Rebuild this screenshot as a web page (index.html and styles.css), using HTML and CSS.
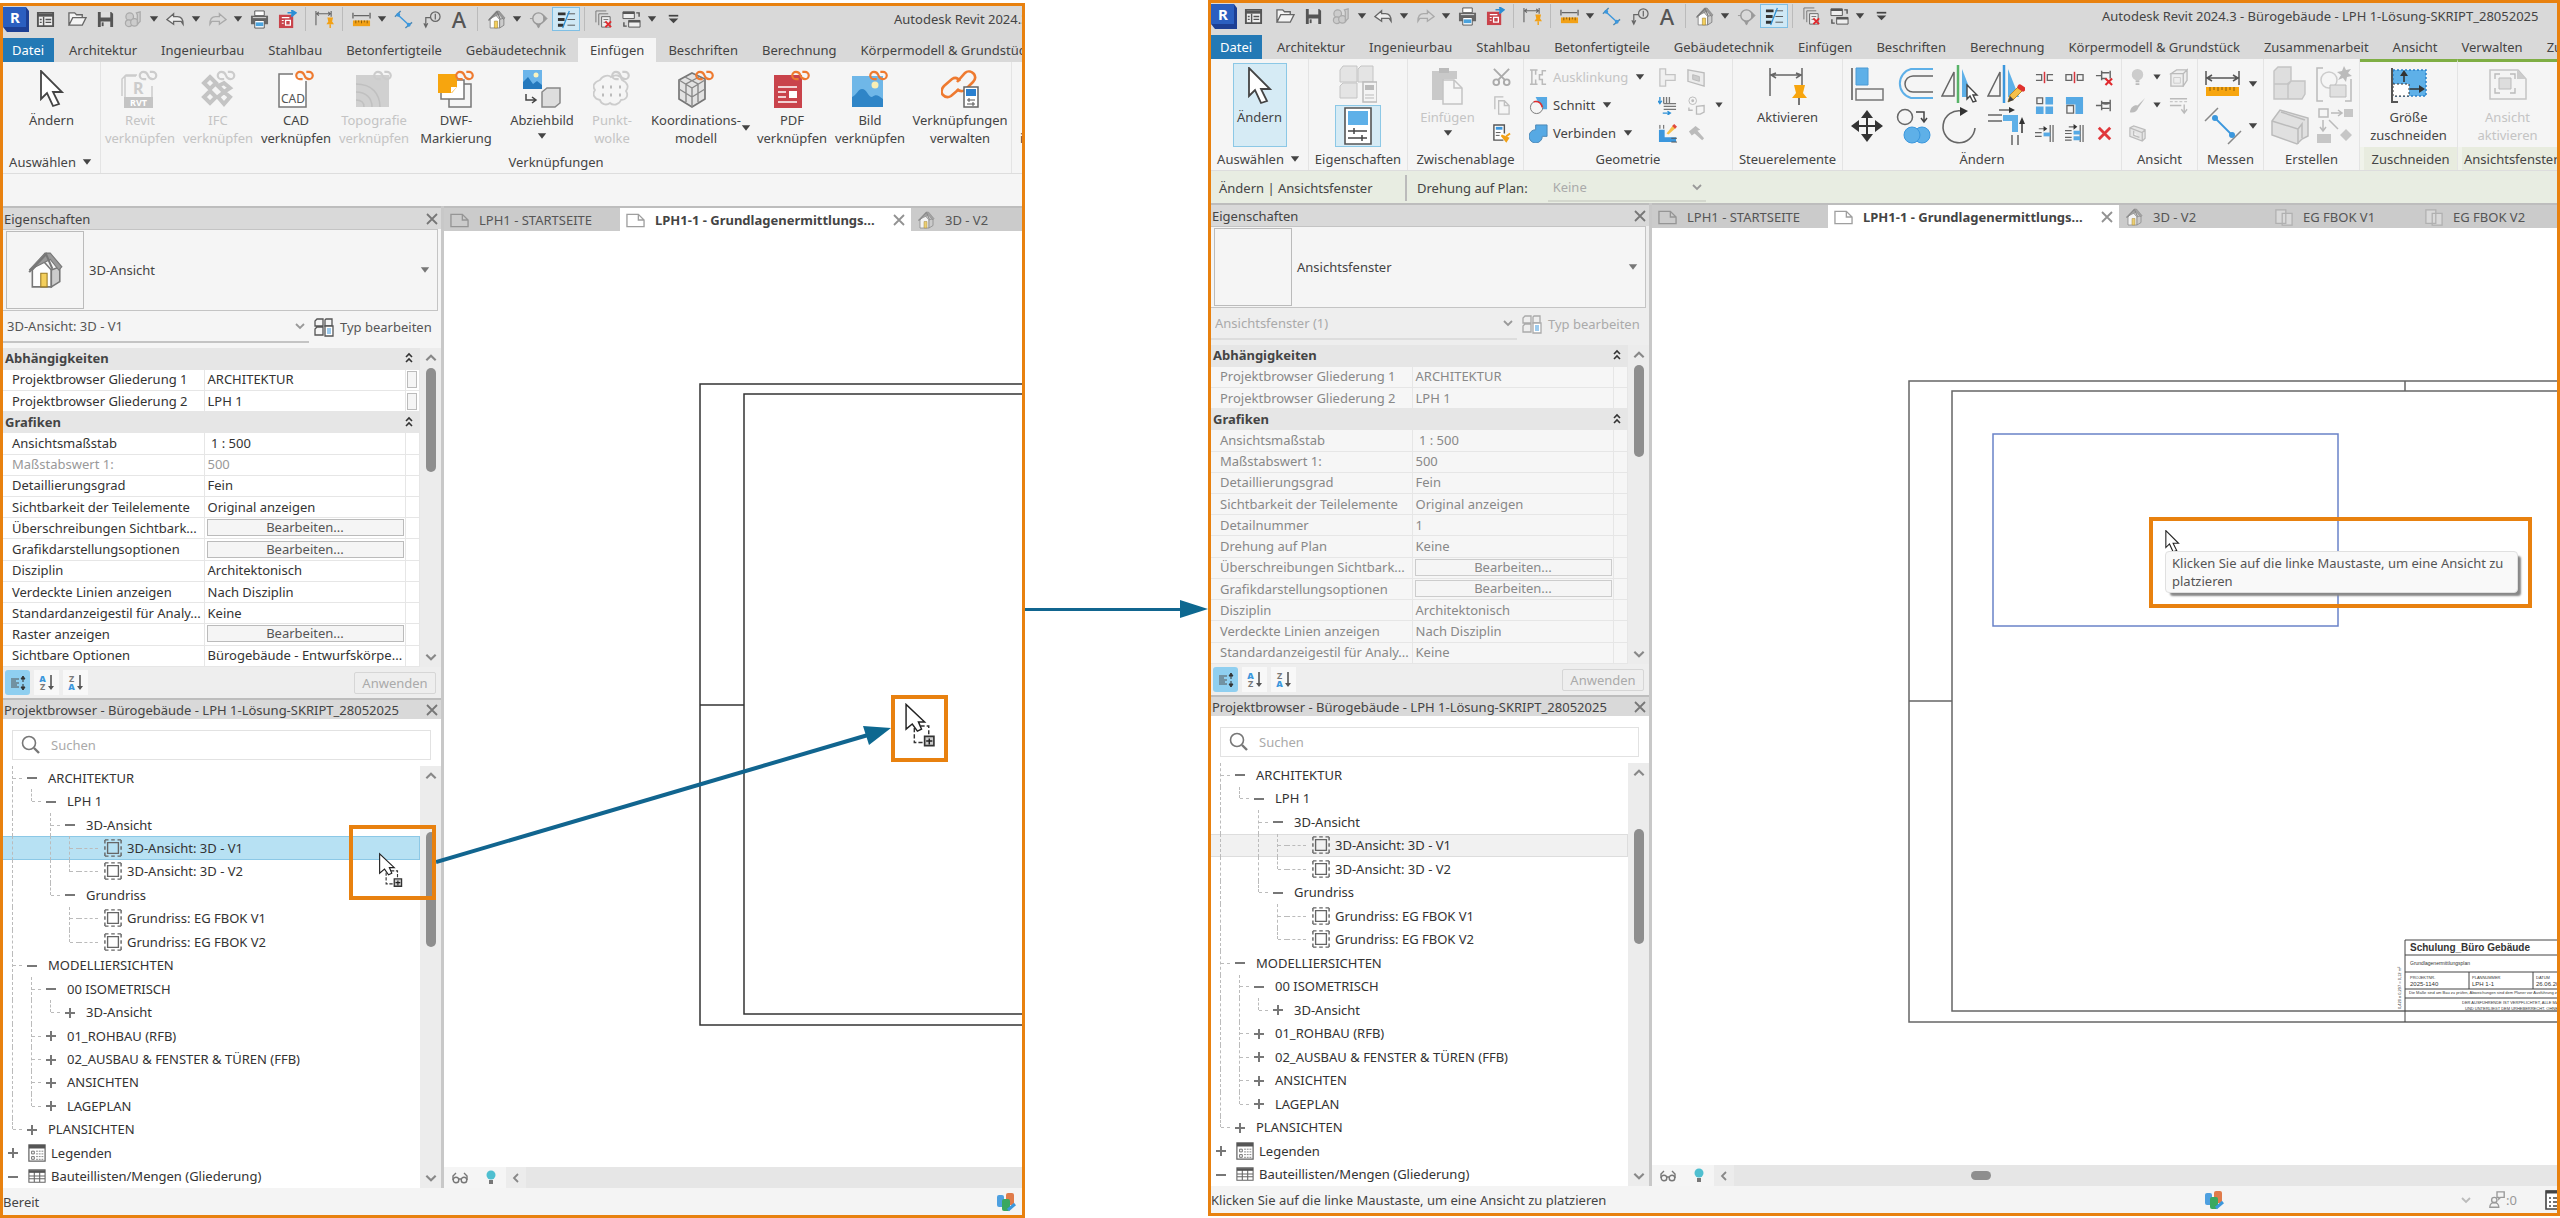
FILE: index.html
```html
<!DOCTYPE html>
<html lang="de">
<head>
    <meta charset="UTF-8">
    <meta name="viewport" content="width=device-width, initial-scale=1.0">
    <title>Ansicht auf Plan platzieren</title>
    <link rel="stylesheet" href="styles.css">
</head>
<body>
    <!-- Icons -->
    <svg class="sprite" aria-hidden="true">
        <defs>
            <symbol id="logo" viewBox="0 0 26 26"><path d="M0 1h23l3 4v21H4l-4-5z" fill="#1d3f94"/><path d="M0 1h23v20H0z" fill="#2b5fc0"/><text x="7" y="17" font-size="15" font-weight="700" fill="#fff" font-family="Noto Sans, sans-serif">R</text></symbol>
            <symbol id="win" viewBox="0 0 20 20"><path d="M2 3h16v14H2z" fill="#eee" stroke="#555" stroke-width="2"/><path d="M2 4h16v3H2z" fill="#555"/><path d="M8 7v10M10 10h6M10 13h6M4 10h2M4 13h2" stroke="#555" stroke-width="1.5"/></symbol>
            <symbol id="open" viewBox="0 0 20 20"><path d="M1 16V3h6l2 2h6v3M1 16l4-8h14l-4 8z" fill="#f4f4f4" stroke="#666" stroke-width="1.4"/></symbol>
            <symbol id="save" viewBox="0 0 20 20"><path d="M2 2h14l2 2v14H2z" fill="#555"/><path d="M5 2h10v6H5zM5 12h10v6H5z" fill="#ddd"/><path d="M7 13v4" stroke="#555" stroke-width="2"/></symbol>
            <symbol id="sync" viewBox="0 0 20 20"><g fill="#ccc" stroke="#aaa" stroke-width="1.3"><circle cx="6" cy="7" r="4"/><circle cx="5" cy="14" r="3.5"/><circle cx="11" cy="13" r="4"/><path d="M13 3l4-1v10l-3 3V5z"/></g></symbol>
            <symbol id="undo" viewBox="0 0 20 20"><path d="M8 4L1 10l7 5v-3h8l2 3q0-8-6-8H8z" fill="#eee" stroke="currentColor" stroke-width="1.4"/></symbol>
            <symbol id="redo" viewBox="0 0 20 20"><path d="M12 4l7 6-7 5v-3H4l-2 3q0-8 6-8h4z" fill="none" stroke="currentColor" stroke-width="1.4"/></symbol>
            <symbol id="print" viewBox="0 0 20 20"><path d="M5 1h10v5H5z" fill="#fff" stroke="#555"/><path d="M1 6h18v9H1z" fill="#666"/><path d="M3 8h14" stroke="#ddd"/><path d="M5 11h10v8H5z" fill="#fff" stroke="#555"/><path d="M6 13h8v4H6z" fill="#4ba3dd"/></symbol>
            <symbol id="pdfexp" viewBox="0 0 20 20"><path d="M1 5h15v14H1z" fill="#c9434b"/><path d="M4 8h8M4 11h2M4 14h2" stroke="#fff" stroke-width="1.2"/><path d="M8 11h5v5H8z" fill="none" stroke="#fff" stroke-width="1.4"/><path d="M10 3h6M14 0l5 3-5 4" fill="#2b8fd6" stroke="#2b8fd6" stroke-width="1.6"/></symbol>
            <symbol id="pindim" viewBox="0 0 20 20"><path d="M1 1v15M17 1v6M2 4h14M4 2L2 4l2 2M14 2l2 2-2 2" fill="none" stroke="#666" stroke-width="1.2"/><path d="M13 8h6l-1 4 2 3h-8l2-3z" fill="#f2a116"/><path d="M16 15v4" stroke="#f2a116" stroke-width="1.5"/></symbol>
            <symbol id="measure" viewBox="0 0 20 20"><path d="M1 3v6M19 3v6M2 6h16" stroke="#666" stroke-width="1.4"/><path d="M1 11h18v6H1z" fill="#f2a116"/><path d="M4 11v3M7 11v2M10 11v3M13 11v2M16 11v3" stroke="#8b5c08"/></symbol>
            <symbol id="dim" viewBox="0 0 20 20"><path d="M4 5l12 11" stroke="#3b97dd" stroke-width="1.5"/><path d="M1 7l6-6M12 19l7-6" stroke="#4e8ab5" stroke-width="1.5"/><circle cx="4.500" cy="5" r="2" fill="#3b97dd"/><circle cx="15.500" cy="15.500" r="2" fill="#3b97dd"/></symbol>
            <symbol id="tag" viewBox="0 0 20 20"><circle cx="14" cy="7" r="5" fill="none" stroke="#666" stroke-width="1.3"/><path d="M14 4v6M9 8H4v10M2 14l2 4 2-4" fill="none" stroke="#666" stroke-width="1.3"/></symbol>
            <symbol id="house" viewBox="0 0 36 36"><path d="M6 18v16h18V18L15 8z" fill="#fdfdfd" stroke="#777" stroke-width="1.500"/><path d="M24 18v16l8-5V15z" fill="#ccc" stroke="#777" stroke-width="1.500"/><path d="M3 18L18 2h5l11 13-3 3-8-10z" fill="#999" stroke="#777"/><path d="M3 20L19 3l6 14" fill="none" stroke="#777" stroke-width="2"/><path d="M14 34V21h6v13z" fill="#f4cf5c" stroke="#9a7b25"/></symbol>
            <symbol id="section" viewBox="0 0 20 20"><circle cx="10" cy="9" r="6" fill="none" stroke="#999" stroke-width="1.5"/><path d="M15 5l4 4-4 4M8 15h4l-2 4zM1 9h3" fill="#999" stroke="#999"/></symbol>
            <symbol id="thin" viewBox="0 0 20 20"><path d="M1 4h8M1 10h7M1 16h6" stroke="#333" stroke-width="3"/><path d="M11 4h8M11 10h8M11 16h8" stroke="#555"/><path d="M13 1L6 19" stroke="#2b8fd6" stroke-width="1.3"/></symbol>
            <symbol id="closehid" viewBox="0 0 20 20"><path d="M2 13V1h11M5 16V4h10" fill="none" stroke="#777"/><path d="M8 7h9v11H8z" fill="#eee" stroke="#666"/><path d="M10 10h5M10 13h3" stroke="#777"/><path d="M12 12l6 6M18 12l-6 6" stroke="#e02a2e" stroke-width="2"/></symbol>
            <symbol id="switch" viewBox="0 0 20 20"><path d="M1 2h12v7H1zM7 11h12v7H7z" fill="#eee" stroke="#555"/><path d="M1 3h12M7 12h12" stroke="#555" stroke-width="2.500"/><path d="M15 3h3v4M5 17H2v-4" fill="none" stroke="#555" stroke-width="1.5"/></symbol>
            <symbol id="custom" viewBox="0 0 20 20"><path d="M5 6h10" stroke="#444" stroke-width="1.8"/><path d="M5 9h10l-5 5z" fill="#444"/></symbol>
            <symbol id="down" viewBox="0 0 10 10"><path d="M2 3h6L5 7z" fill="currentColor"/></symbol>
            <symbol id="chev" viewBox="0 0 12 12"><path d="M2 4l4 4 4-4" fill="none" stroke="currentColor" stroke-width="1.8"/></symbol>
            <symbol id="x" viewBox="0 0 12 12"><path d="M1 1l10 10M11 1L1 11" stroke="currentColor" stroke-width="1.8"/></symbol>
            <symbol id="dblup" viewBox="0 0 10 12"><path d="M2 5l3-3 3 3M2 10l3-3 3 3" fill="none" stroke="#333" stroke-width="1.6"/></symbol>
            <symbol id="arrow" viewBox="0 0 24 38"><path d="M1 1v28l6-6 6 13 6-2-6-12h9z" fill="#fff" stroke="currentColor" stroke-width="1.8"/></symbol>
            <symbol id="chain" viewBox="0 0 22 12"><path d="M11 6c-1-3-3-4-5-4a4 4 0 0 0 0 8h3M11 6c1 3 3 4 5 4a4 4 0 0 0 0-8h-3" fill="none" stroke="currentColor" stroke-width="2.400"/></symbol>
            <symbol id="rvt" viewBox="0 0 38 38"><path d="M16 5H5L1 9v17M31 16v20H4V6h11" fill="none" stroke="#ccc" stroke-width="1.500"/><text x="12" y="24" font-size="16" font-weight="700" fill="#ccc" font-family="Noto Sans, sans-serif">R</text><path d="M3 27h29v11H3z" fill="#c4c4c4"/><text x="9" y="36" font-size="9" font-weight="700" fill="#fff" font-family="Noto Sans, sans-serif">RVT</text><use href="#chain" x="16" y="0" width="22" height="11" color="#ccc"/></symbol>
            <symbol id="ifc" viewBox="0 0 38 38"><g fill="none" stroke="#c4c4c4" stroke-width="4"><path d="M11 7l6 6-6 6-6-6zM25 13l6 5-6 4-6-6zM11 21l6 6-6 6-6-6zM25 22l6 5-6 7-6-7z"/></g><use href="#chain" x="16" y="0" width="22" height="11" color="#ccc"/></symbol>
            <symbol id="cad" viewBox="0 0 38 38"><path d="M16 4H2v33h27V11" fill="#fff" stroke="#777" stroke-width="1.500"/><text x="4" y="33" font-size="12" fill="#555" font-family="Noto Sans, sans-serif">CAD</text><use href="#chain" x="17" y="0" width="21" height="11" color="#ee7a30"/></symbol>
            <symbol id="topo" viewBox="0 0 38 38"><path d="M1 5h33v32H1z" fill="#d0d0d0"/><path d="M1 14c16 0 24 10 24 23M1 22c10 0 16 6 16 15M1 30c5 0 8 2 8 7" fill="none" stroke="#c0c0c0" stroke-width="1.500"/><use href="#chain" x="17" y="0" width="21" height="11" color="#ccc"/></symbol>
            <symbol id="dwf" viewBox="0 0 38 38"><path d="M20 14h14v23H12V27" fill="none" stroke="#777" stroke-width="1.500"/><path d="M4 10h23v19H4z" fill="#fff" stroke="#777" stroke-width="1.500"/><path d="M1 4h19v13l-5 6H1z" fill="#f7a50e"/><path d="M20 17h-6v6" fill="#fff"/><use href="#chain" x="17" y="0" width="21" height="11" color="#ee7a30"/></symbol>
            <symbol id="decal" viewBox="0 0 38 38"><path d="M0 0h19v19H0z" fill="#6cb5ea"/><path d="M0 12l5-5 5 7 4-3 5 4v4H0z" fill="#2579bd"/><circle cx="13" cy="5" r="2.500" fill="#fbf3c0"/><path d="M3 24v6h9M9 27l4 3-4 3" fill="none" stroke="#444" stroke-width="1.500"/><path d="M19 22l5-4h13v15l-5 4H19z" fill="#ddd" stroke="#888" stroke-width="1.500"/></symbol>
            <symbol id="cloud" viewBox="0 0 38 38"><path d="M7 10c3-5 9-5 11-3 4-3 10-2 11 3 6 3 7 7 4 11 3 5 0 9-5 9-2 5-8 6-11 3-4 3-9 1-10-3-6-1-8-6-5-10-3-4-1-8 5-10z" fill="none" stroke="#ccc" stroke-width="1.800"/><path d="M9 17h2M17 17h2M26 17h2M9 25h2M17 25h2M26 25h2" stroke="#bbb" stroke-width="3"/><use href="#chain" x="17" y="0" width="21" height="11" color="#ccc"/></symbol>
            <symbol id="coord" viewBox="0 0 38 38"><path d="M15 3l13 6v20l-13 8-13-8V10z" fill="#e2e2e2" stroke="#777" stroke-width="1.700"/><path d="M2 10l13 8 13-8M15 18v19M2 19l13 8 13-8M8 7l13 7v18M22 7L9 14v18" fill="none" stroke="#888" stroke-width="1.400"/><use href="#chain" x="17" y="0" width="21" height="11" color="#ee7a30"/></symbol>
            <symbol id="pdf" viewBox="0 0 38 38"><path d="M1 5h28v33H1z" fill="#c9434b"/><path d="M5 17h19M5 22h8M5 27h8M5 32h19" stroke="#fff" stroke-width="1.600"/><path d="M16 21h8v7h-8z" fill="#fff"/><use href="#chain" x="17" y="0" width="21" height="11" color="#ee7a30"/></symbol>
            <symbol id="pic" viewBox="0 0 38 38"><path d="M1 6h31v31H1z" fill="#6fb7e8"/><path d="M1 27c4-1 6-8 10-8 5 0 6 8 10 8 4-3 6-2 11 2v8H1z" fill="#2f85c7"/><circle cx="24" cy="15" r="3.500" fill="#f8efb5"/><use href="#chain" x="17" y="0" width="21" height="11" color="#ee7a30"/></symbol>
            <symbol id="links" viewBox="0 0 38 38"><g fill="none" stroke="#ee7a30" stroke-width="2.600"><path d="M16 12l8-9c3-3 7-1 9 1 2 3 1 6-1 8l-8 8c-3 2-6 1-8-1"/><path d="M17 20l-7 6c-3 2-6 1-8-1s-2-6 1-9l8-7c3-2 6-1 8 2"/></g><path d="M23 17h14v20H23z" fill="#fff" stroke="#666" stroke-width="1.500"/><path d="M25 19h10v7H25z" fill="#2980d0"/><path d="M26 30h8M26 34h8M28 28v4M32 32v4" stroke="#555"/></symbol>
            <symbol id="typ" viewBox="0 0 20 20"><path d="M3 2h6v7H1V4zM12 2h6v7h-7V3zM3 10h6v8H1v-6z" fill="none" stroke="currentColor" stroke-width="1.300"/><path d="M11 9h8v10h-8z" fill="#fff" stroke="currentColor" stroke-width="1.300"/><path d="M13 12h4M13 14h4M13 16h4" stroke="#3b97dd"/></symbol>
            <symbol id="sheet" viewBox="0 0 20 16"><path d="M1 2h12l6 6v7H1zM13 2v6h6" fill="none" stroke="#888" stroke-width="1.400"/></symbol>
            <symbol id="plan" viewBox="0 0 20 20"><path d="M1 2h11v15H1zM8 6h11v13H8z" fill="#ddd" stroke="#aaa" stroke-width="1.400"/></symbol>
            <symbol id="view" viewBox="0 0 20 20"><path d="M4 4h12v12H4z" fill="none" stroke="#666" stroke-width="1.500"/><path d="M1 1h18v18H1z" fill="none" stroke="#666" stroke-width="1.600" stroke-dasharray="4 3 4 3 4 0"/></symbol>
            <symbol id="legend" viewBox="0 0 20 20"><path d="M1 1h18v18H1z" fill="#fff" stroke="#666" stroke-width="1.400"/><path d="M1 3h18" stroke="#555" stroke-width="4"/><path d="M4 8h3v3H4zM4 14h3v3H4z" fill="none" stroke="#666"/><path d="M9 8h8M9 11h8M9 14h8M9 17h8" stroke="#777" stroke-dasharray="2 1"/></symbol>
            <symbol id="tbl" viewBox="0 0 20 16"><path d="M1 1h18v14H1zM1 8h18M1 11h18M7 3v12M13 3v12" fill="none" stroke="#666" stroke-width="1.200"/><path d="M1 3h18" stroke="#555" stroke-width="3"/></symbol>
            <symbol id="search" viewBox="0 0 20 20"><circle cx="8" cy="8" r="6.500" fill="none" stroke="#777" stroke-width="1.600"/><path d="M13 13l5 5" stroke="#777" stroke-width="2.400"/></symbol>
            <symbol id="sortcat" viewBox="0 0 16 16"><path d="M1 4h8M1 8h8M1 12h8M1 6h5M1 10h6" stroke="#555"/><path d="M13 4v3M13 9v4M11 4l2-3 2 3zM11 12l2 3 2-3z" fill="#333" stroke="#333"/></symbol>
            <symbol id="down2" viewBox="0 0 6 16"><path d="M3 0v11" stroke="#555" stroke-width="1.600"/><path d="M0 11h6l-3 4z" fill="#555"/></symbol>
            <symbol id="glasses" viewBox="0 0 16 12"><g fill="none" stroke="#777" stroke-width="1.400"><circle cx="4" cy="8" r="2.800"/><circle cx="12" cy="8" r="2.800"/><path d="M1 8V4l3-3M15 8V4l-3-3M7 7h2"/></g></symbol>
            <symbol id="bulb" viewBox="0 0 10 16"><circle cx="5" cy="5" r="4.500" fill="currentColor"/><path d="M3 11h4M3 13h4" stroke="#777" stroke-width="2"/></symbol>
            <symbol id="lamp" viewBox="0 0 20 20"><circle cx="10" cy="7" r="6" fill="#ccc"/><path d="M8 14h4M8 17h4" stroke="#bbb" stroke-width="2"/></symbol>
            <symbol id="wset" viewBox="0 0 20 20"><rect x="1" y="3" width="7" height="12" rx="2" fill="#4ea0e0"/><rect x="10" y="1" width="8" height="12" rx="2" fill="#e07b4a"/><rect x="6" y="7" width="8" height="12" rx="2" fill="#3aa860"/><path d="M12 18l7-6" stroke="#3b97dd" stroke-width="3"/></symbol>
            <symbol id="people" viewBox="0 0 20 20"><circle cx="7" cy="10" r="3" fill="none" stroke="#999" stroke-width="1.500"/><path d="M2 18c0-7 10-7 10 0zM10 1h8v6h-4l-2 2V7h-2z" fill="none" stroke="#999" stroke-width="1.500"/></symbol>
            <symbol id="list" viewBox="0 0 20 20"><path d="M1 1h18v18H1z" fill="#fff" stroke="#444" stroke-width="1.600"/><path d="M1 2h18" stroke="#444" stroke-width="3"/><path d="M4 8h2M8 8h9M4 12h2M8 12h9M4 16h2M8 16h9" stroke="#444" stroke-width="1.400"/></symbol>
            <symbol id="props4" viewBox="0 0 38 38"><g fill="#e4e4e4" stroke="#c4c4c4"><path d="M4 1h14v16H1V5zM22 1h12v16H19V4zM4 18h14v15H1V21z"/></g><path d="M24 17h14v20H24z" fill="#f4f4f4" stroke="#bbb" stroke-width="1.500"/><path d="M26 20h9v5h-9z" fill="#bbb"/><path d="M26 30h9M26 33h9" stroke="#bbb"/></symbol>
            <symbol id="props" viewBox="0 0 28 38"><path d="M1 1h26v36H1z" fill="#fff" stroke="#555" stroke-width="1.600"/><path d="M4 4h20v14H4z" fill="#5eb0e8"/><path d="M4 24h19M4 31h19M10 21v6M18 28v6" stroke="#444" stroke-width="1.500"/></symbol>
            <symbol id="paste" viewBox="0 0 34 38"><path d="M1 4h25v8H13v21H1z" fill="#c9c9c9"/><path d="M8 1h10v5H8z" fill="#bbb"/><path d="M12 13h11l8 8v16H12z" fill="#f6f6f6" stroke="#c4c4c4" stroke-width="1.500"/><path d="M23 13v8h8" fill="none" stroke="#c4c4c4" stroke-width="1.500"/></symbol>
            <symbol id="cut" viewBox="0 0 20 20"><g fill="none" stroke="#aaa" stroke-width="2"><path d="M2 1l12 12M18 1L6 13"/><circle cx="4.500" cy="15" r="3"/><circle cx="15.500" cy="15" r="3"/></g></symbol>
            <symbol id="copy" viewBox="0 0 20 20"><path d="M3 14V1h9M7 5h6l5 5v9H7zM13 5v5h5" fill="none" stroke="#c0c0c0" stroke-width="1.400"/></symbol>
            <symbol id="match" viewBox="0 0 20 20"><path d="M12 17H2V1h11v9" fill="#fff" stroke="#555" stroke-width="1.500"/><path d="M4 3h7v3H4z" fill="#3b97dd"/><path d="M4 9h5M4 12h4" stroke="#555"/><path d="M10 12l5 6 2-3zM15 13l4-3" fill="#f2a116" stroke="#f2a116" stroke-width="2"/></symbol>
            <symbol id="cope" viewBox="0 0 20 20"><path d="M1 2h8M1 17h8M3 2v15M7 2v5M7 12v5M18 3h-4v4h-3v5h3v5h4" fill="none" stroke="#bbb" stroke-width="1.600"/></symbol>
            <symbol id="cutg" viewBox="0 0 20 20"><path d="M7 1h12v13h-6z" fill="#56a9e4"/><circle cx="8" cy="12" r="6.500" fill="#f5f5f5" stroke="#777"/><path d="M5 6c5-1 8 2 9 6" fill="none" stroke="#e02a2e" stroke-width="1.600"/></symbol>
            <symbol id="joing" viewBox="0 0 20 20"><path d="M7 1h12v12h-5a7 7 0 1 1-7-7z" fill="#56a9e4" stroke="#4a86b5"/></symbol>
            <symbol id="joint" viewBox="0 0 20 20"><path d="M2 1h6v6h10v6H8v6H2z" fill="#f0f0f0" stroke="#c4c4c4" stroke-width="1.400"/></symbol>
            <symbol id="box" viewBox="0 0 20 20"><path d="M1 2l17 3v14L1 14z" fill="#ececec" stroke="#bbb" stroke-width="1.400"/><path d="M6 7l7 2v5l-7-2z" fill="#ccc" stroke="#bbb"/></symbol>
            <symbol id="wallj" viewBox="0 0 20 20"><path d="M6 1v7M9 1v7M12 1v7M6 8h13M6 11h13M6 14h13" stroke="#777" stroke-width="1.400"/><path d="M2 1v7M0 5l2 3 2-3M5 18h7M10 16l3 2-3 2" fill="none" stroke="#2b8fd6" stroke-width="1.400"/></symbol>
            <symbol id="split2" viewBox="0 0 20 20"><circle cx="6" cy="5" r="4" fill="none" stroke="#bbb"/><circle cx="6" cy="5" r="1.500" fill="#bbb"/><path d="M10 11l8-1v7l-4 2h-4zM2 12v3h4" fill="none" stroke="#bbb" stroke-width="1.400"/></symbol>
            <symbol id="paint" viewBox="0 0 20 20"><path d="M1 6h6v8h12v5H1z" fill="#3b97dd"/><path d="M2 1v4M6 1v4M14 19h6M14 15h6" stroke="#555"/><path d="M9 10l7-9 3 3-8 7z" fill="#f6c04a"/><path d="M16 1l3 3" stroke="#e0483e" stroke-width="3"/></symbol>
            <symbol id="hammer" viewBox="0 0 20 20"><path d="M2 8l7-6 5 4-3 1 7 8-2 2-8-7-3 2z" fill="#bbb"/></symbol>
            <symbol id="actpin" viewBox="0 0 38 38"><path d="M1 1v28M33 1v18M2 8h30M7 6L2 8l5 3M27 6l5 2-5 3" fill="none" stroke="#666" stroke-width="1.500"/><path d="M25 18h11l-2 8 4 5H23l4-5z" fill="#f7a50e"/><path d="M30 31v7" stroke="#555" stroke-width="1.600"/></symbol>
            <symbol id="align" viewBox="0 0 38 38"><path d="M3 3v32" stroke="#555" stroke-width="1.500"/><path d="M7 3h12v17H7z" fill="#5eb0e8" stroke="#4a9ad4"/><path d="M7 24h27v11H7z" fill="#f5f5f5" stroke="#777" stroke-width="1.500"/></symbol>
            <symbol id="offset" viewBox="0 0 38 38"><path d="M38 4H16a15 15 0 0 0 0 29h22" fill="none" stroke="#5eb0e8" stroke-width="2"/><path d="M38 11H18a8 8 0 0 0 0 16h20" fill="none" stroke="#666" stroke-width="1.500"/></symbol>
            <symbol id="mirror1" viewBox="0 0 38 38"><path d="M13 7v24H1z" fill="none" stroke="#666" stroke-width="1.500"/><path d="M17 0v38" stroke="#58b368" stroke-width="2.500"/><path d="M21 4v28h11z" fill="#5eb0e8"/><path d="M26 20v14l3-3 3 6 3-1-3-6h4z" fill="#fff" stroke="#444" stroke-width="1.400"/></symbol>
            <symbol id="mirror2" viewBox="0 0 38 38"><path d="M13 7v24H1z" fill="none" stroke="#666" stroke-width="1.500"/><path d="M17 0v38" stroke="#3b97dd" stroke-width="2.500"/><path d="M21 4v28h11z" fill="#5eb0e8"/><path d="M21 37l2-7L33 20l4 4-10 10z" fill="#f6c04a" stroke="#b88a2c"/><path d="M33 22l3 2" stroke="#e0322e" stroke-width="5" stroke-linecap="round"/><path d="M21 37l2-6 4 4z" fill="#444"/></symbol>
            <symbol id="move" viewBox="0 0 38 38"><path d="M18 6v26M5 19h26" stroke="#333" stroke-width="2"/><path d="M18 3l6 8H12zM18 35l6-8H12zM2 19l8-6v12zM34 19l-8-6v12z" fill="#333"/></symbol>
            <symbol id="cpy" viewBox="0 0 38 38"><circle cx="10" cy="10" r="7.500" fill="none" stroke="#666" stroke-width="1.500"/><path d="M21 5h8v9M26 11l3 4 3-4" fill="none" stroke="#444" stroke-width="1.500"/><circle cx="27" cy="28" r="8" fill="#5eb0e8" stroke="#3b97dd"/><circle cx="17" cy="28" r="8" fill="#5eb0e8" stroke="#3b97dd"/></symbol>
            <symbol id="rot" viewBox="0 0 38 38"><path d="M21 4A16 16 0 1 0 34 21" fill="none" stroke="#666" stroke-width="1.600"/><path d="M19 0l8 4-8 5z" fill="#333"/></symbol>
            <symbol id="trim" viewBox="0 0 38 38"><path d="M1 8h14M1 14h14M25 28v10M31 28v10M12 3h12" stroke="#666" stroke-width="1.500"/><path d="M16 8h15v17h-6V14h-9z" fill="#5eb0e8"/><path d="M22 0l6 3-6 3zM35 10l3 7h-6z" fill="#333"/><path d="M35 14v12" stroke="#333" stroke-width="1.500"/></symbol>
            <symbol id="split" viewBox="0 0 20 20"><path d="M1 7h6v6H1M19 7h-6v6h6" fill="none" stroke="#666" stroke-width="1.400"/><path d="M10 4v12" stroke="#d8333a" stroke-width="1.600"/></symbol>
            <symbol id="gap" viewBox="0 0 20 20"><path d="M1 7h6v6H1zM19 7h-6v6h6z" fill="none" stroke="#666" stroke-width="1.400"/><path d="M10 4v12" stroke="#d8333a" stroke-width="1.600"/></symbol>
            <symbol id="pin" viewBox="0 0 20 20"><path d="M1 10h6M7 5v10M7 7h8M7 13h8M16 4v12M7 7c3 2 6 2 9 0" fill="none" stroke="#666" stroke-width="1.500"/></symbol>
            <symbol id="unpin" viewBox="0 0 20 20"><path d="M1 8h6M7 3v10M7 5h8M7 11h5M16 3v8" fill="none" stroke="#666" stroke-width="1.500"/><path d="M11 11l7 7M18 11l-7 7" stroke="#e02a2e" stroke-width="2.200"/></symbol>
            <symbol id="array" viewBox="0 0 20 20"><path d="M2 2h6v6H2z" fill="none" stroke="#666" stroke-width="1.400"/><path d="M11 1h8v8h-8zM1 11h8v8H1zM11 11h8v8h-8z" fill="#56a9e4"/></symbol>
            <symbol id="scale" viewBox="0 0 20 20"><path d="M1 1h18v18h-8V9H1z" fill="#56a9e4"/><path d="M2 10h7v8H2z" fill="none" stroke="#666" stroke-width="1.400"/></symbol>
            <symbol id="ext" viewBox="0 0 20 20"><path d="M0 9h7M0 13h7M16 1v18M19 1v18M4 5h7" stroke="#666" stroke-width="1.300"/><path d="M9 9h7v4H9z" fill="#56a9e4"/><path d="M9 2l4 3-4 3z" fill="#333"/></symbol>
            <symbol id="ext2" viewBox="0 0 20 20"><path d="M0 7h7M0 10h7M0 14h7M0 17h7M16 1v18M19 1v18M4 3h7" stroke="#666" stroke-width="1.300"/><path d="M9 7h7v4H9zM9 13h7v4H9z" fill="#56a9e4"/><path d="M9 0l4 3-4 3z" fill="#333"/></symbol>
            <symbol id="del" viewBox="0 0 20 20"><path d="M4 4l12 12M16 4L4 16" stroke="#e0383c" stroke-width="3"/></symbol>
            <symbol id="brush" viewBox="0 0 20 20"><path d="M2 17c1-6 5-8 8-7L18 2l-7 10c-1 4-5 6-9 5z" fill="#bbb"/></symbol>
            <symbol id="cube" viewBox="0 0 20 20"><path d="M2 6l6-4h11l-4 4zM2 6h13v13H2zM15 6l4-4v11l-4 6z" fill="#eee" stroke="#bbb" stroke-width="1.400"/><path d="M5 10h7v6H5z" fill="none" stroke="#ccc"/></symbol>
            <symbol id="lines" viewBox="0 0 20 20"><path d="M1 3h18M1 10h12" stroke="#bbb" stroke-width="1.600"/><path d="M1 6h18" stroke="#bbb" stroke-dasharray="3 2"/><path d="M16 9v8M13 14l3 4 3-4" fill="none" stroke="#bbb" stroke-width="1.500"/></symbol>
            <symbol id="wbox" viewBox="0 0 20 20"><path d="M2 4l4-2 12 4v9l-3 3-13-5zM2 4l13 5v9M15 9l3-3M6 7v5l6 2" fill="#e6e6e6" stroke="#bbb" stroke-width="1.300"/></symbol>
            <symbol id="mes" viewBox="0 0 38 38"><path d="M2 6v14M35 6v14M3 13h31M8 10l-5 3 5 3M29 10l5 3-5 3" fill="none" stroke="#555" stroke-width="1.500"/><path d="M2 22h33v9H2z" fill="#f7a50e"/><path d="M6 22v4M10 22v3M14 22v4M18 22v3M22 22v4M26 22v3M30 22v4" stroke="#8b5c08"/></symbol>
            <symbol id="diag" viewBox="0 0 38 38"><path d="M1 14L14 1M24 37l13-13" stroke="#888" stroke-width="1.500"/><path d="M10 10l18 18" stroke="#3b97dd" stroke-width="1.800"/><circle cx="11" cy="11" r="3" fill="#3b97dd"/><circle cx="28" cy="28" r="3" fill="#3b97dd"/></symbol>
            <symbol id="asm" viewBox="0 0 38 38"><g fill="#dedede" stroke="#c4c4c4" stroke-width="1.400"><path d="M3 6l4-4h13v14l-4 3H3zM3 19h14v15H3zM17 20l3-4h14v13l-3 5H17z"/></g></symbol>
            <symbol id="grp" viewBox="0 0 38 38"><path d="M8 3H2v33h6M30 36h6V14" fill="none" stroke="#bbb" stroke-width="1.500"/><circle cx="14" cy="15" r="8" fill="none" stroke="#ccc" stroke-width="1.500"/><path d="M15 20h16v12H15z" fill="#e0e0e0" stroke="#bbb"/><path d="M29 1l2 4 5-1-3 4 4 3-5 1-1 5-3-4-5 2 3-5-4-3 5-1z" fill="#bbb"/></symbol>
            <symbol id="parts" viewBox="0 0 38 38"><path d="M1 14l8-11 28 8v18l-6 3-5 5-25-9z" fill="#e0e0e0" stroke="#bbb" stroke-width="1.500"/><path d="M1 14l26 8v15M27 22l4-5v14M10 5l24 8" fill="none" stroke="#bbb" stroke-width="1.500"/></symbol>
            <symbol id="flow" viewBox="0 0 38 38"><path d="M4 2h9v8H4z" fill="none" stroke="#bbb" stroke-width="1.500"/><path d="M29 2h9v8h-9zM2 27h14v9H2zM31 22l6 6-6 6-6-6z" fill="#c6c6c6"/><path d="M16 6h10M8 13v10M14 13l9 9M23 3l4 3-4 3M5 20l3 4 3-4" fill="none" stroke="#bbb" stroke-width="1.500"/></symbol>
            <symbol id="crop" viewBox="0 0 38 38"><path d="M3 3h33v26H3z" fill="#5eb0e8" stroke="#2b80c8" stroke-dasharray="2 2" stroke-width="1.500"/><path d="M3 17h16v12H3z" fill="#fff" stroke="#333" stroke-dasharray="2 2"/><path d="M2 1v34h6" fill="none" stroke="#555" stroke-width="2"/><path d="M14 15V7M20 22h11" stroke="#333" stroke-width="1.600"/><path d="M14 3l4 6h-8zM35 22l-6-4v8z" fill="#333"/></symbol>
            <symbol id="act" viewBox="0 0 38 38"><path d="M1 3h28l8 9v20H1z" fill="#f4f4f4" stroke="#c4c4c4" stroke-width="1.500"/><path d="M28 3v9h9z" fill="#ccc"/><path d="M10 11h12v11H10z" fill="#ddd" stroke="#bbb"/><path d="M6 12V7h5M21 7h5v5M26 21v5h-5M11 26H6v-5" fill="none" stroke="#bbb" stroke-width="1.400"/></symbol>
            <symbol id="drag" viewBox="0 0 32 42"><path d="M10 22h14v16H10z" fill="none" stroke="#333" stroke-width="1.400" stroke-dasharray="4 2"/><path d="M2 1v24l6-5 5 7 4-2-3-7h6z" fill="#fff" stroke="#222" stroke-width="1.400"/><path d="M20 32h9v9h-9z" fill="#ccc" stroke="#333" stroke-width="1.600"/><path d="M24.500 34v6M21.500 36.500h6" stroke="#222" stroke-width="1.400"/></symbol>
        </defs>
    </svg>

    <main class="slide">
        <!-- Schritt 1: Ansicht aus dem Projektbrowser ziehen -->
        <section class="window window-left">
            <header class="qat">
                <svg class="logo"><use href="#logo"/></svg>
                <button class="q first" aria-label="Fenster"><svg><use href="#win"/></svg></button>
                <button class="q" aria-label="Öffnen"><svg><use href="#open"/></svg></button>
                <button class="q" aria-label="Speichern"><svg><use href="#save"/></svg></button>
                <button class="q" aria-label="Synchronisieren"><svg><use href="#sync"/></svg></button>
                <svg class="dd"><use href="#down"/></svg>
                <button class="q" aria-label="Rückgängig"><svg><use href="#undo"/></svg></button>
                <svg class="dd"><use href="#down"/></svg>
                <button class="q off" aria-label="Wiederholen"><svg><use href="#redo"/></svg></button>
                <svg class="dd"><use href="#down"/></svg>
                <button class="q" aria-label="Drucken"><svg><use href="#print"/></svg></button>
                <button class="q" aria-label="PDF exportieren"><svg><use href="#pdfexp"/></svg></button>
                <i class="sep"></i>
                <button class="q" aria-label="Steuerelemente"><svg><use href="#pindim"/></svg></button>
                <i class="sep"></i>
                <button class="q" aria-label="Messen"><svg><use href="#measure"/></svg></button>
                <svg class="dd"><use href="#down"/></svg>
                <button class="q" aria-label="Bemaßung"><svg><use href="#dim"/></svg></button>
                <button class="q" aria-label="Beschriftung"><svg><use href="#tag"/></svg></button>
                <button class="q letter" aria-label="Text">A</button>
                <i class="sep"></i>
                <button class="q" aria-label="3D-Ansicht"><svg><use href="#house"/></svg></button>
                <svg class="dd"><use href="#down"/></svg>
                <button class="q" aria-label="Schnitt"><svg><use href="#section"/></svg></button>
                <button class="q on" aria-label="Feine Linien"><svg><use href="#thin"/></svg></button>
                <i class="sep"></i>
                <button class="q" aria-label="Verdeckte schließen"><svg><use href="#closehid"/></svg></button>
                <button class="q" aria-label="Fenster wechseln"><svg><use href="#switch"/></svg></button>
                <svg class="dd"><use href="#down"/></svg>
                <button class="q" aria-label="Anpassen"><svg><use href="#custom"/></svg></button>
                <span class="app-title">Autodesk Revit 2024.3 - Bürogebäude - LPH 1-Lösung-SKRIPT_28052025</span>
            </header>
            <nav class="menu">
                <a href="#" class="file">Datei</a>
                <a href="#">Architektur</a>
                <a href="#">Ingenieurbau</a>
                <a href="#">Stahlbau</a>
                <a href="#">Betonfertigteile</a>
                <a href="#">Gebäudetechnik</a>
                <a href="#" class="current">Einfügen</a>
                <a href="#">Beschriften</a>
                <a href="#">Berechnung</a>
                <a href="#">Körpermodell &amp; Grundstück</a>
            </nav>
            <div class="ribbon">
                <div class="panel p-select">
                    <div class="tools"><button class="btn"><svg><use href="#arrow"/></svg>Ändern</button></div>
                    <h3>Auswählen <svg class="dd"><use href="#down"/></svg></h3>
                </div>
                <div class="panel">
                    <div class="tools">
                        <button class="btn" disabled><svg><use href="#rvt"/></svg>Revit<br>verknüpfen</button>
                        <button class="btn" disabled><svg><use href="#ifc"/></svg>IFC<br>verknüpfen</button>
                        <button class="btn"><svg><use href="#cad"/></svg>CAD<br>verknüpfen</button>
                        <button class="btn" disabled><svg><use href="#topo"/></svg>Topografie<br>verknüpfen</button>
                        <button class="btn wide"><svg><use href="#dwf"/></svg>DWF-<br>Markierung</button>
                        <button class="btn wide"><svg><use href="#decal"/></svg>Abziehbild<svg class="dd"><use href="#down"/></svg></button>
                        <button class="btn narrow" disabled><svg><use href="#cloud"/></svg>Punkt-<br>wolke</button>
                        <button class="btn xwide"><svg><use href="#coord"/></svg>Koordinations-<br>modell<svg class="dd flyout"><use href="#down"/></svg></button>
                        <button class="btn"><svg><use href="#pdf"/></svg>PDF<br>verknüpfen</button>
                        <button class="btn"><svg><use href="#pic"/></svg>Bild<br>verknüpfen</button>
                        <button class="btn link"><svg><use href="#links"/></svg>Verknüpfungen<br>verwalten</button>
                    </div>
                    <h3>Verknüpfungen</h3>
                </div>
                <div class="panel rest">
                    <div class="tools"><button class="btn"><br>importieren</button></div>
                </div>
            </div>
            <div class="options"></div>

            <div class="workspace">
                <aside class="side">
                    <div class="side-head"><h2>Eigenschaften</h2><button aria-label="Schließen"><svg><use href="#x"/></svg></button></div>
                    <div class="type-box">
                        <div class="preview"><svg><use href="#house"/></svg></div>
                        <span>3D-Ansicht</span>
                        <svg class="dd"><use href="#down"/></svg>
                    </div>
                    <div class="instance">
                        <div class="pick"><select aria-label="Element"><option>3D-Ansicht: 3D - V1</option></select><svg><use href="#chev"/></svg></div>
                        <button class="edit-type"><svg><use href="#typ"/></svg>Typ bearbeiten</button>
                    </div>
                    <div class="props">
                        <table>
                            <tr class="cat"><th colspan="2">Abhängigkeiten</th><td><svg><use href="#dblup"/></svg></td></tr>
                            <tr><td>Projektbrowser Gliederung 1</td><td>ARCHITEKTUR</td><td><button class="mini" aria-label="Zuordnen"></button></td></tr>
                            <tr><td>Projektbrowser Gliederung 2</td><td>LPH 1</td><td><button class="mini" aria-label="Zuordnen"></button></td></tr>
                            <tr class="cat"><th colspan="2">Grafiken</th><td><svg><use href="#dblup"/></svg></td></tr>
                            <tr><td>Ansichtsmaßstab</td><td>&nbsp;1 : 500</td><td></td></tr>
                            <tr class="dim"><td>Maßstabswert 1:</td><td>500</td><td></td></tr>
                            <tr><td>Detaillierungsgrad</td><td>Fein</td><td></td></tr>
                            <tr><td>Sichtbarkeit der Teilelemente</td><td>Original anzeigen</td><td></td></tr>
                            <tr><td>Überschreibungen Sichtbark...</td><td><button>Bearbeiten...</button></td><td></td></tr>
                            <tr><td>Grafikdarstellungsoptionen</td><td><button>Bearbeiten...</button></td><td></td></tr>
                            <tr><td>Disziplin</td><td>Architektonisch</td><td></td></tr>
                            <tr><td>Verdeckte Linien anzeigen</td><td>Nach Disziplin</td><td></td></tr>
                            <tr><td>Standardanzeigestil für Analy...</td><td>Keine</td><td></td></tr>
                            <tr><td>Raster anzeigen</td><td><button>Bearbeiten...</button></td><td></td></tr>
                            <tr><td>Sichtbare Optionen</td><td>Bürogebäude - Entwurfskörpe...</td><td></td></tr>
                        </table>
                        <div class="scroll"><svg class="up"><use href="#chev"/></svg><i class="thumb"></i><svg class="end"><use href="#chev"/></svg></div>
                    </div>
                    <div class="side-foot">
                        <button class="sort on" aria-label="Nach Kategorie"><svg><use href="#sortcat"/></svg></button>
                        <button class="sort" aria-label="A bis Z"><span><b>A</b>Z</span><svg class="ar"><use href="#down2"/></svg></button>
                        <button class="sort" aria-label="Z bis A"><span>Z<b>A</b></span><svg class="ar"><use href="#down2"/></svg></button>
                        <button class="apply" disabled>Anwenden</button>
                    </div>
                    <div class="side-head browser-head"><h2>Projektbrowser - Bürogebäude - LPH 1-Lösung-SKRIPT_28052025</h2><button aria-label="Schließen"><svg><use href="#x"/></svg></button></div>
                    <label class="search"><svg><use href="#search"/></svg><input type="text" placeholder="Suchen" aria-label="Suchen"></label>
                    <div class="browser">
                        <ul class="tree">
                            <li><i class="g t"></i><button class="minus" aria-label="Zuklappen"></button><span>ARCHITEKTUR</span></li>
                            <li><i class="g v"></i><i class="g l"></i><button class="minus" aria-label="Zuklappen"></button><span>LPH 1</span></li>
                            <li><i class="g v"></i><i class="g"></i><i class="g t"></i><button class="minus" aria-label="Zuklappen"></button><span>3D-Ansicht</span></li>
                            <li class="selected"><i class="g v"></i><i class="g"></i><i class="g v"></i><i class="g t"></i><i class="g h"></i><svg><use href="#view"/></svg>3D-Ansicht: 3D - V1</li>
                            <li><i class="g v"></i><i class="g"></i><i class="g v"></i><i class="g l"></i><i class="g h"></i><svg><use href="#view"/></svg>3D-Ansicht: 3D - V2</li>
                            <li><i class="g v"></i><i class="g"></i><i class="g l"></i><button class="minus" aria-label="Zuklappen"></button><span>Grundriss</span></li>
                            <li><i class="g v"></i><i class="g"></i><i class="g"></i><i class="g t"></i><i class="g h"></i><svg><use href="#view"/></svg>Grundriss: EG FBOK V1</li>
                            <li><i class="g v"></i><i class="g"></i><i class="g"></i><i class="g l"></i><i class="g h"></i><svg><use href="#view"/></svg>Grundriss: EG FBOK V2</li>
                            <li><i class="g t"></i><button class="minus" aria-label="Zuklappen"></button><span>MODELLIERSICHTEN</span></li>
                            <li><i class="g v"></i><i class="g t"></i><button class="minus" aria-label="Zuklappen"></button><span>00 ISOMETRISCH</span></li>
                            <li><i class="g v"></i><i class="g v"></i><i class="g l"></i><button class="plus" aria-label="Aufklappen"></button><span>3D-Ansicht</span></li>
                            <li><i class="g v"></i><i class="g t"></i><button class="plus" aria-label="Aufklappen"></button><span>01_ROHBAU (RFB)</span></li>
                            <li><i class="g v"></i><i class="g t"></i><button class="plus" aria-label="Aufklappen"></button><span>02_AUSBAU &amp; FENSTER &amp; TÜREN (FFB)</span></li>
                            <li><i class="g v"></i><i class="g t"></i><button class="plus" aria-label="Aufklappen"></button><span>ANSICHTEN</span></li>
                            <li><i class="g v"></i><i class="g l"></i><button class="plus" aria-label="Aufklappen"></button><span>LAGEPLAN</span></li>
                            <li><i class="g l"></i><button class="plus" aria-label="Aufklappen"></button><span>PLANSICHTEN</span></li>
                            <li><button class="plus" aria-label="Aufklappen"></button><svg><use href="#legend"/></svg>Legenden</li>
                            <li><button class="minus" aria-label="Zuklappen"></button><svg><use href="#tbl"/></svg>Bauteillisten/Mengen (Gliederung)</li>
                        </ul>
                        <div class="scroll"><svg class="up"><use href="#chev"/></svg><i class="thumb"></i><svg class="end"><use href="#chev"/></svg></div>
                    </div>
                </aside>

                <div class="stage">
                    <div class="tabs">
                        <button class="tab t-start"><svg class="sheet"><use href="#sheet"/></svg>LPH1 - STARTSEITE</button>
                        <button class="tab active"><svg class="sheet"><use href="#sheet"/></svg>LPH1-1 - Grundlagenermittlungs...<svg class="x"><use href="#x"/></svg></button>
                        <button class="tab"><svg><use href="#house"/></svg>3D - V2</button>
                    </div>
                    <div class="canvas">
                        <svg class="drawing">
                            <g fill="none" stroke="#333" stroke-width="1.500">
                                <rect x="254" y="153" width="1600" height="641"/>
                                <rect x="298" y="163" width="1600" height="620"/>
                                <path d="M254 474h44"/>
                            </g>
                        </svg>
                    </div>
                    <div class="viewbar">
                        <svg class="glasses"><use href="#glasses"/></svg>
                        <svg class="bulb"><use href="#bulb"/></svg>
                        <button class="left" aria-label="Nach links"><svg><use href="#chev"/></svg></button>
                        <div class="track"></div>
                    </div>
                </div>
            </div>
            <footer class="status"><span>Bereit</span><svg class="wset"><use href="#wset"/></svg></footer>

            <!-- Hervorhebungen -->
            <svg class="drag-line" viewBox="0 0 460 146">
                <path d="M0 142L432 15" stroke="#11658f" stroke-width="4"/>
                <path d="M455 8L427 6l6 19z" fill="#0d6890"/>
            </svg>
            <div class="mark mark-source"><svg><use href="#drag"/></svg></div>
            <div class="mark mark-target"><svg><use href="#drag"/></svg></div>
        </section>

        <div class="step"><i></i><svg viewBox="0 0 28 18"><path d="M0 0l28 9-28 9z" fill="#0d6890"/></svg></div>

        <!-- Schritt 2: Ansicht auf dem Plan platzieren -->
        <section class="window window-right">
            <header class="qat">
                <svg class="logo"><use href="#logo"/></svg>
                <button class="q first" aria-label="Fenster"><svg><use href="#win"/></svg></button>
                <button class="q" aria-label="Öffnen"><svg><use href="#open"/></svg></button>
                <button class="q" aria-label="Speichern"><svg><use href="#save"/></svg></button>
                <button class="q" aria-label="Synchronisieren"><svg><use href="#sync"/></svg></button>
                <svg class="dd"><use href="#down"/></svg>
                <button class="q" aria-label="Rückgängig"><svg><use href="#undo"/></svg></button>
                <svg class="dd"><use href="#down"/></svg>
                <button class="q off" aria-label="Wiederholen"><svg><use href="#redo"/></svg></button>
                <svg class="dd"><use href="#down"/></svg>
                <button class="q" aria-label="Drucken"><svg><use href="#print"/></svg></button>
                <button class="q" aria-label="PDF exportieren"><svg><use href="#pdfexp"/></svg></button>
                <i class="sep"></i>
                <button class="q" aria-label="Steuerelemente"><svg><use href="#pindim"/></svg></button>
                <i class="sep"></i>
                <button class="q" aria-label="Messen"><svg><use href="#measure"/></svg></button>
                <svg class="dd"><use href="#down"/></svg>
                <button class="q" aria-label="Bemaßung"><svg><use href="#dim"/></svg></button>
                <button class="q" aria-label="Beschriftung"><svg><use href="#tag"/></svg></button>
                <button class="q letter" aria-label="Text">A</button>
                <i class="sep"></i>
                <button class="q" aria-label="3D-Ansicht"><svg><use href="#house"/></svg></button>
                <svg class="dd"><use href="#down"/></svg>
                <button class="q" aria-label="Schnitt"><svg><use href="#section"/></svg></button>
                <button class="q on" aria-label="Feine Linien"><svg><use href="#thin"/></svg></button>
                <i class="sep"></i>
                <button class="q" aria-label="Verdeckte schließen"><svg><use href="#closehid"/></svg></button>
                <button class="q" aria-label="Fenster wechseln"><svg><use href="#switch"/></svg></button>
                <svg class="dd"><use href="#down"/></svg>
                <button class="q" aria-label="Anpassen"><svg><use href="#custom"/></svg></button>
                <span class="app-title">Autodesk Revit 2024.3 - Bürogebäude - LPH 1-Lösung-SKRIPT_28052025</span>
            </header>
            <nav class="menu">
                <a href="#" class="file">Datei</a>
                <a href="#">Architektur</a>
                <a href="#">Ingenieurbau</a>
                <a href="#">Stahlbau</a>
                <a href="#">Betonfertigteile</a>
                <a href="#">Gebäudetechnik</a>
                <a href="#">Einfügen</a>
                <a href="#">Beschriften</a>
                <a href="#">Berechnung</a>
                <a href="#">Körpermodell &amp; Grundstück</a>
                <a href="#">Zusammenarbeit</a>
                <a href="#">Ansicht</a>
                <a href="#">Verwalten</a>
                <a href="#">Zusatzmodule</a>
            </nav>
            <div class="ribbon">
                <div class="panel p-select">
                    <div class="tools"><button class="btn pressed"><svg><use href="#arrow"/></svg>Ändern</button></div>
                    <h3>Auswählen <svg class="dd"><use href="#down"/></svg></h3>
                </div>
                <div class="panel p-props">
                    <div class="tools stack">
                        <button aria-label="Typeneigenschaften" disabled><svg><use href="#props4"/></svg></button>
                        <button class="pressed" aria-label="Eigenschaften"><svg><use href="#props"/></svg></button>
                    </div>
                    <h3>Eigenschaften</h3>
                </div>
                <div class="panel p-clip">
                    <div class="tools">
                        <button class="btn" disabled><svg><use href="#paste"/></svg>Einfügen<svg class="dd"><use href="#down"/></svg></button>
                        <div class="grid g1">
                            <svg><use href="#cut"/></svg>
                            <svg><use href="#copy"/></svg>
                            <svg><use href="#match"/></svg>
                        </div>
                    </div>
                    <h3>Zwischenablage</h3>
                </div>
                <div class="panel p-geo">
                    <div class="tools">
                        <div class="cmds">
                            <button disabled><svg><use href="#cope"/></svg>Ausklinkung<svg class="dd"><use href="#down"/></svg></button>
                            <button><svg><use href="#cutg"/></svg>Schnitt<svg class="dd"><use href="#down"/></svg></button>
                            <button><svg><use href="#joing"/></svg>Verbinden<svg class="dd"><use href="#down"/></svg></button>
                        </div>
                        <div class="grid g2">
                            <svg><use href="#joint"/></svg><svg><use href="#box"/></svg><i></i>
                            <svg><use href="#wallj"/></svg><svg><use href="#split2"/></svg><svg class="dd"><use href="#down"/></svg>
                            <svg><use href="#paint"/></svg><svg><use href="#hammer"/></svg><i></i>
                        </div>
                    </div>
                    <h3>Geometrie</h3>
                </div>
                <div class="panel p-ctrl">
                    <div class="tools"><button class="btn"><svg><use href="#actpin"/></svg>Aktivieren</button></div>
                    <h3>Steuerelemente</h3>
                </div>
                <div class="panel p-modify">
                    <div class="tools">
                        <div class="big">
                            <svg><use href="#align"/></svg><svg><use href="#offset"/></svg><svg><use href="#mirror1"/></svg><svg><use href="#mirror2"/></svg>
                            <svg><use href="#move"/></svg><svg><use href="#cpy"/></svg><svg><use href="#rot"/></svg><svg><use href="#trim"/></svg>
                        </div>
                        <div class="grid g3">
                            <svg><use href="#split"/></svg><svg><use href="#gap"/></svg><svg><use href="#unpin"/></svg>
                            <svg><use href="#array"/></svg><svg><use href="#scale"/></svg><svg><use href="#pin"/></svg>
                            <svg><use href="#ext"/></svg><svg><use href="#ext2"/></svg><svg><use href="#del"/></svg>
                        </div>
                    </div>
                    <h3>Ändern</h3>
                </div>
                <div class="panel p-view">
                    <div class="tools">
                        <div class="grid g4">
                            <svg><use href="#lamp"/></svg><svg class="dd"><use href="#down"/></svg><svg><use href="#cube"/></svg>
                            <svg><use href="#brush"/></svg><svg class="dd"><use href="#down"/></svg><svg><use href="#lines"/></svg>
                            <svg><use href="#wbox"/></svg>
                        </div>
                    </div>
                    <h3>Ansicht</h3>
                </div>
                <div class="panel p-measure">
                    <div class="tools">
                        <div class="big two">
                            <svg><use href="#mes"/></svg><svg class="dd"><use href="#down"/></svg>
                            <svg><use href="#diag"/></svg><svg class="dd"><use href="#down"/></svg>
                        </div>
                    </div>
                    <h3>Messen</h3>
                </div>
                <div class="panel p-create">
                    <div class="tools">
                        <div class="big pair">
                            <svg><use href="#asm"/></svg><svg><use href="#grp"/></svg>
                            <svg><use href="#parts"/></svg><svg><use href="#flow"/></svg>
                        </div>
                    </div>
                    <h3>Erstellen</h3>
                </div>
                <div class="panel context p-crop">
                    <div class="tools"><button class="btn"><svg><use href="#crop"/></svg>Größe<br>zuschneiden</button></div>
                    <h3>Zuschneiden</h3>
                </div>
                <div class="panel context rest">
                    <div class="tools"><button class="btn" disabled><svg><use href="#act"/></svg>Ansicht<br>aktivieren</button></div>
                    <h3>Ansichtsfenster</h3>
                </div>
            </div>
            <div class="options active">
                <span class="mode">Ändern | Ansichtsfenster</span>
                <label for="rotation">Drehung auf Plan:</label>
                <div class="pick"><select id="rotation" disabled><option>Keine</option></select><svg><use href="#chev"/></svg></div>
            </div>

            <div class="workspace">
                <aside class="side inactive">
                    <div class="side-head"><h2>Eigenschaften</h2><button aria-label="Schließen"><svg><use href="#x"/></svg></button></div>
                    <div class="type-box">
                        <div class="preview"></div>
                        <span>Ansichtsfenster</span>
                        <svg class="dd"><use href="#down"/></svg>
                    </div>
                    <div class="instance">
                        <div class="pick"><select aria-label="Element" disabled><option>Ansichtsfenster (1)</option></select><svg><use href="#chev"/></svg></div>
                        <button class="edit-type" disabled><svg><use href="#typ"/></svg>Typ bearbeiten</button>
                    </div>
                    <div class="props">
                        <table>
                            <tr class="cat"><th colspan="2">Abhängigkeiten</th><td><svg><use href="#dblup"/></svg></td></tr>
                            <tr><td>Projektbrowser Gliederung 1</td><td>ARCHITEKTUR</td><td></td></tr>
                            <tr><td>Projektbrowser Gliederung 2</td><td>LPH 1</td><td></td></tr>
                            <tr class="cat"><th colspan="2">Grafiken</th><td><svg><use href="#dblup"/></svg></td></tr>
                            <tr><td>Ansichtsmaßstab</td><td>&nbsp;1 : 500</td><td></td></tr>
                            <tr><td>Maßstabswert 1:</td><td>500</td><td></td></tr>
                            <tr><td>Detaillierungsgrad</td><td>Fein</td><td></td></tr>
                            <tr><td>Sichtbarkeit der Teilelemente</td><td>Original anzeigen</td><td></td></tr>
                            <tr><td>Detailnummer</td><td>1</td><td></td></tr>
                            <tr><td>Drehung auf Plan</td><td>Keine</td><td></td></tr>
                            <tr><td>Überschreibungen Sichtbark...</td><td><button>Bearbeiten...</button></td><td></td></tr>
                            <tr><td>Grafikdarstellungsoptionen</td><td><button>Bearbeiten...</button></td><td></td></tr>
                            <tr><td>Disziplin</td><td>Architektonisch</td><td></td></tr>
                            <tr><td>Verdeckte Linien anzeigen</td><td>Nach Disziplin</td><td></td></tr>
                            <tr><td>Standardanzeigestil für Analy...</td><td>Keine</td><td></td></tr>
                        </table>
                        <div class="scroll"><svg class="up"><use href="#chev"/></svg><i class="thumb"></i><svg class="end"><use href="#chev"/></svg></div>
                    </div>
                    <div class="side-foot">
                        <button class="sort on" aria-label="Nach Kategorie"><svg><use href="#sortcat"/></svg></button>
                        <button class="sort" aria-label="A bis Z"><span><b>A</b>Z</span><svg class="ar"><use href="#down2"/></svg></button>
                        <button class="sort" aria-label="Z bis A"><span>Z<b>A</b></span><svg class="ar"><use href="#down2"/></svg></button>
                        <button class="apply" disabled>Anwenden</button>
                    </div>
                    <div class="side-head browser-head"><h2>Projektbrowser - Bürogebäude - LPH 1-Lösung-SKRIPT_28052025</h2><button aria-label="Schließen"><svg><use href="#x"/></svg></button></div>
                    <label class="search"><svg><use href="#search"/></svg><input type="text" placeholder="Suchen" aria-label="Suchen"></label>
                    <div class="browser">
                        <ul class="tree">
                            <li><i class="g t"></i><button class="minus" aria-label="Zuklappen"></button><span>ARCHITEKTUR</span></li>
                            <li><i class="g v"></i><i class="g l"></i><button class="minus" aria-label="Zuklappen"></button><span>LPH 1</span></li>
                            <li><i class="g v"></i><i class="g"></i><i class="g t"></i><button class="minus" aria-label="Zuklappen"></button><span>3D-Ansicht</span></li>
                            <li class="selected"><i class="g v"></i><i class="g"></i><i class="g v"></i><i class="g t"></i><i class="g h"></i><svg><use href="#view"/></svg>3D-Ansicht: 3D - V1</li>
                            <li><i class="g v"></i><i class="g"></i><i class="g v"></i><i class="g l"></i><i class="g h"></i><svg><use href="#view"/></svg>3D-Ansicht: 3D - V2</li>
                            <li><i class="g v"></i><i class="g"></i><i class="g l"></i><button class="minus" aria-label="Zuklappen"></button><span>Grundriss</span></li>
                            <li><i class="g v"></i><i class="g"></i><i class="g"></i><i class="g t"></i><i class="g h"></i><svg><use href="#view"/></svg>Grundriss: EG FBOK V1</li>
                            <li><i class="g v"></i><i class="g"></i><i class="g"></i><i class="g l"></i><i class="g h"></i><svg><use href="#view"/></svg>Grundriss: EG FBOK V2</li>
                            <li><i class="g t"></i><button class="minus" aria-label="Zuklappen"></button><span>MODELLIERSICHTEN</span></li>
                            <li><i class="g v"></i><i class="g t"></i><button class="minus" aria-label="Zuklappen"></button><span>00 ISOMETRISCH</span></li>
                            <li><i class="g v"></i><i class="g v"></i><i class="g l"></i><button class="plus" aria-label="Aufklappen"></button><span>3D-Ansicht</span></li>
                            <li><i class="g v"></i><i class="g t"></i><button class="plus" aria-label="Aufklappen"></button><span>01_ROHBAU (RFB)</span></li>
                            <li><i class="g v"></i><i class="g t"></i><button class="plus" aria-label="Aufklappen"></button><span>02_AUSBAU &amp; FENSTER &amp; TÜREN (FFB)</span></li>
                            <li><i class="g v"></i><i class="g t"></i><button class="plus" aria-label="Aufklappen"></button><span>ANSICHTEN</span></li>
                            <li><i class="g v"></i><i class="g l"></i><button class="plus" aria-label="Aufklappen"></button><span>LAGEPLAN</span></li>
                            <li><i class="g l"></i><button class="plus" aria-label="Aufklappen"></button><span>PLANSICHTEN</span></li>
                            <li><button class="plus" aria-label="Aufklappen"></button><svg><use href="#legend"/></svg>Legenden</li>
                            <li><button class="minus" aria-label="Zuklappen"></button><svg><use href="#tbl"/></svg>Bauteillisten/Mengen (Gliederung)</li>
                        </ul>
                        <div class="scroll"><svg class="up"><use href="#chev"/></svg><i class="thumb"></i><svg class="end"><use href="#chev"/></svg></div>
                    </div>
                </aside>

                <div class="stage">
                    <div class="tabs">
                        <button class="tab t-start"><svg class="sheet"><use href="#sheet"/></svg>LPH1 - STARTSEITE</button>
                        <button class="tab active"><svg class="sheet"><use href="#sheet"/></svg>LPH1-1 - Grundlagenermittlungs...<svg class="x"><use href="#x"/></svg></button>
                        <button class="tab"><svg><use href="#house"/></svg>3D - V2</button>
                        <button class="tab"><svg><use href="#plan"/></svg>EG FBOK V1</button>
                        <button class="tab"><svg><use href="#plan"/></svg>EG FBOK V2</button>
                    </div>
                    <div class="canvas">
                        <svg class="drawing">
                            <g fill="none" stroke="#666" stroke-width="1.500">
                                <rect x="255" y="153" width="1600" height="641"/>
                                <rect x="298" y="163" width="1600" height="620"/>
                                <path d="M255 473h43M751 153v10"/>
                            </g>
                            <rect x="339" y="206" width="345" height="192" fill="none" stroke="#6a82c8" stroke-width="1.500"/>
                            <path d="M751 794v-82h200M751 727h200M751 744h200M751 761h200M751 770h200M815 744v17M879 744v17" fill="none" stroke="#444"/>
                            <g class="plan-text">
                                <text x="756" y="723" font-size="10" font-weight="700">Schulung_Büro Gebäude</text>
                                <text x="756" y="737" font-size="5">Grundlagenermittlungsplan</text>
                                <text x="756" y="751" font-size="4">PROJEKTNR.</text>
                                <text x="756" y="758" font-size="6">2025-1140</text>
                                <text x="818" y="751" font-size="4">PLANNUMMER</text>
                                <text x="818" y="758" font-size="6">LPH 1-1</text>
                                <text x="882" y="751" font-size="4">DATUM</text>
                                <text x="882" y="758" font-size="6">26.06.2025</text>
                                <text x="755" y="766" font-size="4">Die Maße sind am Bau zu prüfen, Abweichungen sind dem Planer vor Ausführung zu melden.</text>
                                <text x="808" y="776" font-size="4">DER AUSFÜHRENDE IST VERPFLICHTET, ALLE MASSE ZU PRÜFEN</text>
                                <text x="811" y="782" font-size="4">UND UNTERLIEGT DEM URHEBERRECHT. OHNE VORHERIGE</text>
                                <text transform="translate(747 781) rotate(-90)" font-size="4">0,420 x 0,297 = 0,12 m²</text>
                            </g>
                        </svg>
                        <div class="mark mark-drop"></div>
                        <svg class="pointer"><use href="#arrow"/></svg>
                        <div class="tooltip">Klicken Sie auf die linke Maustaste, um eine Ansicht zu platzieren</div>
                    </div>
                    <div class="viewbar">
                        <svg class="glasses"><use href="#glasses"/></svg>
                        <svg class="bulb"><use href="#bulb"/></svg>
                        <button class="left" aria-label="Nach links"><svg><use href="#chev"/></svg></button>
                        <div class="track"><i class="hthumb"></i></div>
                    </div>
                </div>
            </div>
            <footer class="status">
                <span>Klicken Sie auf die linke Maustaste, um eine Ansicht zu platzieren</span>
                <svg class="wset"><use href="#wset"/></svg>
                <svg class="chev"><use href="#chev"/></svg>
                <svg class="people"><use href="#people"/></svg><span class="count">:0</span>
                <svg class="list"><use href="#list"/></svg>
            </footer>
        </section>
    </main>
</body>
</html>
```
FILE: styles.css
```css
* {
    box-sizing: border-box;
}

body {
    margin: 0;
    background: #fff;
    font-family: "Noto Sans", "Open Sans", sans-serif;
    font-size: 13px;
    line-height: 18px;
    color: #444;
}

button, input, select {
    font: inherit;
    color: inherit;
    margin: 0;
    padding: 0;
    border: 0;
    background: none;
}

h2, h3, ul {
    margin: 0;
    padding: 0;
    font-size: inherit;
    font-weight: 400;
    list-style: none;
}

svg {
    display: block;
    flex: none;
}

.sprite {
    position: absolute;
    width: 0;
    height: 0;
}

.slide {
    display: grid;
    grid-template-columns: 1025fr 183fr 1352fr;
    min-height: 100vh;
}

.window {
    display: flex;
    flex-direction: column;
    position: relative;
    min-width: 0;
    overflow: hidden;
    border: 3px solid #e8810f;
    background: #f5f5f5;
}

.window-left {
    margin-top: 3px;
}

.window-right {
    margin-bottom: 2px;
}

.step {
    display: flex;
    align-items: center;
}

.step i {
    flex: 1;
    height: 3px;
    background: #11658f;
}

.step svg {
    width: 28px;
    height: 18px;
}

/* Schnellzugriff */
.qat {
    display: flex;
    align-items: center;
    height: 32px;
    padding-bottom: 6px;
    background: #d9d9d9;
    white-space: nowrap;
}

.qat > * {
    flex: none;
}

.logo {
    width: 26px;
    height: 26px;
}

.q {
    display: flex;
    align-items: center;
    justify-content: center;
    width: 28px;
    height: 24px;
    color: #666;
}

.q.first {
    margin: 0 4px 0 2px;
}

.q svg {
    width: 19px;
    height: 19px;
}

.q.off {
    color: #aaa;
}

.q.on {
    background: #cfe8f5;
    border: 1px solid #7fbfe4;
}

.q.letter {
    font-size: 22px;
    font-weight: 500;
    color: #555;
}

.dd {
    width: 14px;
    height: 14px;
    color: #444;
}

.sep {
    width: 1px;
    height: 24px;
    margin: 0 4px;
    background: #bbb;
}

.app-title {
    margin-left: 207px;
}

/* Registerkarten */
.menu {
    display: flex;
    height: 24px;
    background: #d9d9d9;
    white-space: nowrap;
}

.menu a {
    flex: none;
    padding: 3px 12px;
    color: #444;
    text-decoration: none;
}

.menu .file {
    width: 51px;
    margin-right: 3px;
    padding: 3px 9px;
    background: #2379b5;
    color: #fff;
}

.menu .current {
    background: #f5f5f5;
}

/* Multifunktionsleiste */
.ribbon {
    display: flex;
    height: 112px;
    border-bottom: 1px solid #ddd;
}

.panel {
    display: flex;
    flex: none;
    flex-direction: column;
    border-right: 1px solid #e4e4e4;
}

.panel h3 {
    display: flex;
    align-items: center;
    justify-content: center;
    gap: 4px;
    height: 23px;
    white-space: nowrap;
}

.tools {
    display: flex;
    justify-content: center;
    height: 88px;
    padding-top: 4px;
}

.btn {
    display: flex;
    flex-direction: column;
    align-items: center;
    position: relative;
    width: 78px;
    height: 84px;
    padding-top: 4px;
    line-height: 18px;
    text-align: center;
    white-space: nowrap;
}

.btn > svg:first-child {
    width: 38px;
    height: 38px;
    margin-bottom: 3px;
}

.btn:disabled,
.cmds button:disabled {
    color: #c4c4c4;
}

.btn.wide {
    width: 86px;
}

.btn.narrow {
    width: 54px;
}

.btn.xwide {
    width: 114px;
}

.btn.link {
    width: 102px;
}

.flyout {
    position: absolute;
    right: 0;
    top: 55px;
}

.pressed {
    background: #d6ebf5;
    border: 1px solid #8cc8e6;
}

.btn.pressed {
    width: 54px;
    padding-top: 3px;
}

.p-select {
    width: 98px;
}

.p-props {
    width: 99px;
}

.p-clip {
    width: 116px;
}

.p-geo {
    width: 209px;
}

.p-ctrl {
    width: 110px;
}

.p-modify {
    width: 279px;
}

.p-view {
    width: 76px;
}

.p-measure {
    width: 66px;
}

.p-create {
    width: 96px;
}

.p-crop {
    width: 98px;
}

.panel.rest {
    flex: 1;
    min-width: 0;
    overflow: hidden;
    border-right: 0;
}

.window-left .rest .btn {
    padding-top: 45px;
    align-items: flex-start;
    width: 100%;
    padding-left: 8px;
}

.window-right .rest .btn {
    width: 100%;
}

.context {
    border-top: 3px solid #7fae44;
}

.context .tools {
    height: 85px;
    padding-top: 1px;
}

.context h3 {
    background: #e8ecdf;
    border-left: 4px solid #f0f3ea;
}

.context.rest h3 {
    justify-content: flex-start;
    padding-left: 2px;
}

.stack {
    flex-direction: column;
    align-items: center;
    justify-content: flex-start;
}

.stack button {
    display: flex;
    align-items: center;
    justify-content: center;
    width: 46px;
    height: 42px;
}

.stack svg {
    width: 38px;
    height: 38px;
}

.p-clip .btn {
    width: 72px;
}

.grid {
    display: grid;
    grid-auto-rows: 28px;
    align-items: center;
    justify-items: center;
}

.grid svg {
    width: 19px;
    height: 19px;
}

.grid .dd {
    width: 12px;
    height: 12px;
}

.g1 {
    grid-template-columns: 36px;
}

.g2 {
    grid-template-columns: 29px 29px 16px;
}

.g3 {
    grid-template-columns: 30px 30px 30px;
}

.g4 {
    grid-template-columns: 24px 14px 30px;
}

.cmds {
    width: 124px;
}

.cmds button {
    display: flex;
    align-items: center;
    gap: 5px;
    height: 28px;
}

.cmds button > svg:first-child {
    width: 19px;
    height: 19px;
}

.big {
    display: grid;
    grid-template-columns: repeat(4, 46px);
    grid-auto-rows: 42px;
    align-items: center;
    justify-items: center;
}

.big svg {
    width: 38px;
    height: 38px;
}

.big .dd {
    width: 14px;
    height: 14px;
}

.big.two {
    grid-template-columns: 44px 16px;
}

.big.pair {
    grid-template-columns: 44px 44px;
}

/* Optionsleiste */
.options {
    display: flex;
    align-items: center;
    height: 32px;
}

.options.active {
    background: #e8ede2;
    padding-top: 2px;
}

.options .mode {
    width: 196px;
    padding: 4px 8px;
    border-right: 2px solid #bbb;
}

.options label {
    margin-left: 10px;
}

.pick {
    display: flex;
    position: relative;
    align-items: center;
    height: 28px;
    border-bottom: 2px solid #c4c4c4;
}

.pick select {
    width: 100%;
    height: 26px;
    appearance: none;
    opacity: 1;
    color: #555;
}

.pick select:disabled {
    color: #aaa;
}

.pick svg {
    position: absolute;
    right: 3px;
    width: 12px;
    height: 12px;
    color: #999;
    pointer-events: none;
}

.options .pick {
    width: 158px;
    margin-left: 20px;
    padding-left: 5px;
    border-color: #d4d8ce;
}

/* Arbeitsbereich */
.workspace {
    display: flex;
    flex: 1;
    min-height: 0;
}

.side {
    display: flex;
    flex: none;
    flex-direction: column;
    width: 441px;
    border-right: 3px solid #c8c8c8;
}

.side-head {
    display: flex;
    align-items: center;
    justify-content: space-between;
    height: 23px;
    border-top: 2px solid #bdbdbd;
    background: #d9d9d9;
    white-space: nowrap;
}

.side-head h2 {
    padding-left: 1px;
}

.side-head button {
    width: 20px;
    height: 20px;
    padding-left: 5px;
    color: #777;
}

.side-head svg {
    width: 12px;
    height: 12px;
}

.type-box {
    display: flex;
    align-items: center;
    height: 82px;
    margin-right: 3px;
    padding: 0 5px 0 3px;
    border: 1px solid #c4c4c4;
    border-left: 0;
}

.type-box span {
    flex: 1;
    padding-left: 5px;
}

.type-box .dd {
    color: #777;
}

.preview {
    display: flex;
    align-items: center;
    justify-content: center;
    width: 78px;
    height: 78px;
    border: 1px solid #bbb;
}

.preview svg {
    width: 38px;
    height: 38px;
}

.instance {
    display: flex;
    height: 37px;
}

.instance .pick {
    width: 306px;
    height: 32px;
    padding-left: 4px;
}

.edit-type {
    display: flex;
    align-items: center;
    gap: 6px;
    height: 32px;
    margin-left: 5px;
    color: #555;
}

.edit-type svg {
    width: 20px;
    height: 20px;
}

.edit-type:disabled {
    color: #aaa;
}

.props {
    display: flex;
    height: 319px;
}

.props table {
    flex: 1;
    table-layout: fixed;
    border-collapse: collapse;
    background: #fff;
    color: #333;
    line-height: 16px;
}

.props td {
    height: 21px;
    padding: 0 0 1px 3px;
    border: 1px solid #e6e6e6;
    border-left: 0;
    white-space: nowrap;
}

.props td:first-child {
    width: 201px;
    padding-left: 9px;
}

.props td:last-child {
    width: 14px;
    padding: 0 1px;
}

.props .cat {
    background: #e6e6e6;
}

.props th {
    padding: 0 0 1px 2px;
    text-align: left;
    font-weight: 700;
    color: #444;
}

.props .cat td {
    padding: 0;
    border: 0;
}

.props .cat svg {
    width: 10px;
    height: 12px;
    margin-left: -2px;
}

.props .dim td {
    color: #999;
}

.props td button {
    display: block;
    width: 197px;
    height: 17px;
    margin-left: -1px;
    border: 1px solid #bbb;
    background: #f5f5f5;
    line-height: 15px;
    color: #555;
}

.props td .mini {
    width: 10px;
    margin: 0;
}

.scroll {
    display: flex;
    flex: none;
    flex-direction: column;
    align-items: center;
    width: 21px;
    background: #ececec;
    color: #888;
}

.scroll svg {
    width: 14px;
    height: 14px;
    margin: 3px 0;
}

.scroll .up {
    transform: rotate(180deg);
}

.scroll .end {
    margin-top: auto;
}

.thumb {
    width: 10px;
    height: 104px;
    border-radius: 5px;
    background: #8e8e8e;
}

.side-foot {
    display: flex;
    align-items: center;
    gap: 4px;
    height: 31px;
    padding: 0 5px 0 2px;
    background: #eee;
}

.sort {
    display: flex;
    align-items: center;
    justify-content: center;
    gap: 2px;
    width: 25px;
    height: 25px;
    background: #f8f8f8;
}

.sort.on {
    border-radius: 3px;
    background: #8fcff0;
}

.sort svg {
    width: 16px;
    height: 16px;
}

.sort .ar {
    width: 6px;
}

.sort span {
    display: flex;
    flex-direction: column;
    font-size: 9px;
    line-height: 8px;
    font-weight: 700;
    color: #777;
}

.sort b {
    color: #3b97dd;
}

.apply {
    width: 82px;
    height: 22px;
    margin-left: auto;
    border: 1px solid #d6d6d6;
    border-radius: 2px;
    line-height: 18px;
    color: #aaa;
}

.browser-head {
    height: 21px;
}

.search {
    display: flex;
    align-items: center;
    height: 47px;
    padding: 11px 10px 6px 9px;
    background: #fff;
}

.search svg {
    position: absolute;
    width: 20px;
    height: 20px;
    margin-left: 9px;
}

.search input {
    width: 100%;
    height: 30px;
    padding-left: 38px;
    border: 1px solid #e2e2e2;
}

.search input::placeholder {
    color: #aaa;
    opacity: 1;
}

.browser {
    display: flex;
    flex: 1;
    min-height: 0;
    background: #fff;
}

.browser .thumb {
    height: 115px;
    margin-top: 46px;
}

.tree {
    display: grid;
    grid-auto-rows: 1fr;
    flex: 1;
    color: #333;
}

.tree li {
    display: flex;
    align-items: center;
    min-height: 0;
    white-space: nowrap;
    border: 1px solid transparent;
    border-left: 0;
}

.tree li.selected {
    background: #b7e1f3;
    border-color: #8cc8e6;
}

.tree svg {
    width: 18px;
    height: 18px;
    margin: 0 5px 0 6px;
}

.tree span {
    padding-left: 7px;
}

.g {
    position: relative;
    align-self: stretch;
    width: 19px;
}

.g.v::before,
.g.t::before,
.g.l::before {
    content: "";
    position: absolute;
    left: 9px;
    top: -1px;
    bottom: -1px;
    border-left: 1px dashed #bbb;
}

.g.l::before {
    bottom: 50%;
}

.g.t::after,
.g.l::after,
.g.h::after {
    content: "";
    position: absolute;
    left: 10px;
    right: 0;
    top: 50%;
    border-top: 1px dashed #bbb;
}

.g.h::after {
    left: 0;
}

.minus,
.plus {
    position: relative;
    width: 19px;
    height: 19px;
}

.minus::before,
.plus::before,
.plus::after {
    content: "";
    position: absolute;
    left: 5px;
    top: 9px;
    width: 10px;
    height: 2px;
    background: #777;
}

.plus::after {
    left: 9px;
    top: 5px;
    width: 2px;
    height: 10px;
}

/* Inaktive Palette */
.inactive {
    background: #eee;
}

.inactive .type-box {
    background: #f5f5f5;
}

.inactive .pick {
    border-color: #ddd;
}

.inactive .props table {
    background: #f6f6f6;
    color: #888;
}

.inactive .props td button {
    border-color: #ccc;
    color: #888;
}

.inactive .props .thumb {
    height: 92px;
}

.inactive .tree .selected {
    background: #f1f1f1;
    border-color: #ddd;
}

/* Zeichenbereich */
.stage {
    display: flex;
    flex: 1;
    flex-direction: column;
    min-width: 0;
}

.tabs {
    display: flex;
    height: 25px;
    border-top: 2px solid #bdbdbd;
    background: #cbcbcb;
}

.tab {
    display: flex;
    flex: none;
    align-items: center;
    gap: 10px;
    width: 150px;
    padding-left: 6px;
    white-space: nowrap;
    color: #555;
}

.tab svg {
    width: 18px;
    height: 18px;
    opacity: 0.8;
}

.tab .sheet {
    width: 19px;
    height: 16px;
}

.tab.t-start {
    width: 176px;
}

.tab.active {
    width: 291px;
    background: #fff;
    font-weight: 700;
    color: #444;
}

.tab .x {
    width: 12px;
    height: 12px;
    margin: 0 6px 0 auto;
    color: #777;
}

.canvas {
    position: relative;
    flex: 1;
    overflow: hidden;
    border-left: 2px solid #fff;
    background: #fff;
}

.drawing {
    position: absolute;
    width: 100%;
    height: 100%;
}

.plan-text {
    font-family: "Liberation Sans", Arial, sans-serif;
    fill: #333;
}

.viewbar {
    display: flex;
    align-items: center;
    height: 21px;
}

.glasses {
    width: 16px;
    height: 12px;
    margin-left: 8px;
}

.bulb {
    width: 10px;
    height: 16px;
    margin: 0 10px 0 18px;
    color: #4fbfd0;
}

.left {
    width: 20px;
    height: 21px;
    padding-left: 4px;
    background: #ececec;
    color: #888;
}

.left svg {
    width: 12px;
    height: 12px;
    transform: rotate(90deg);
}

.track {
    flex: 1;
    align-self: stretch;
    padding: 6px 0 0 237px;
    background: #e6e6e6;
}

.hthumb {
    display: block;
    width: 20px;
    height: 9px;
    border-radius: 5px;
    background: #8e8e8e;
}

.status {
    display: flex;
    align-items: center;
    height: 27px;
    background: #f4f4f4;
}

.status .wset {
    width: 20px;
    height: 20px;
    margin: 0 6px 0 auto;
}

.window-right .status .wset {
    margin-right: 236px;
}

.status .chev {
    width: 12px;
    height: 12px;
    margin-right: 16px;
    color: #bbb;
}

.people {
    width: 18px;
    height: 18px;
}

.count {
    color: #999;
}

.list {
    width: 20px;
    height: 20px;
    margin: 0 -8px 0 28px;
}

/* Markierungen ueber den Fenstern */
.mark {
    position: absolute;
    border: 4px solid #e8810f;
}

.mark svg {
    position: absolute;
}

.mark-source {
    left: 346px;
    top: 819px;
    width: 87px;
    height: 75px;
}

.mark-source svg {
    left: 25px;
    top: 23px;
    width: 26px;
    height: 36px;
}

.mark-target {
    left: 888px;
    top: 689px;
    width: 57px;
    height: 67px;
}

.mark-target svg {
    left: 9px;
    top: 4px;
    width: 33px;
    height: 44px;
}

.drag-line {
    position: absolute;
    left: 433px;
    top: 714px;
    width: 460px;
    height: 146px;
}

.mark-drop {
    left: 495px;
    top: 289px;
    width: 383px;
    height: 91px;
}

.pointer {
    position: absolute;
    left: 511px;
    top: 302px;
    width: 15px;
    height: 23px;
    color: #222;
}

.tooltip {
    position: absolute;
    left: 511px;
    top: 323px;
    width: 353px;
    padding: 2px 6px;
    border: 1px solid #e0e0e0;
    border-radius: 4px;
    background: #f9f9f9;
    box-shadow: 4px 4px 2px -1px #888;
    color: #555;
}
```
